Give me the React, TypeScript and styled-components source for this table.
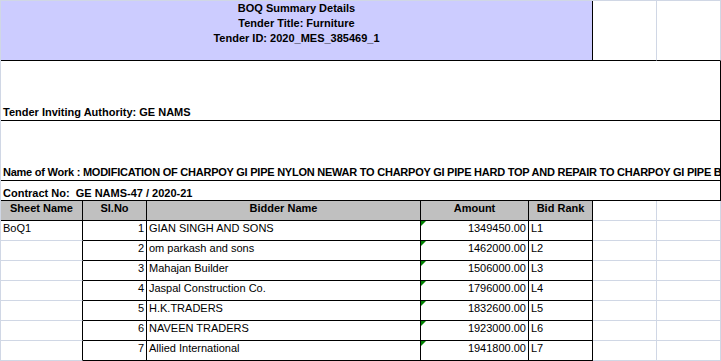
import { Fragment } from 'react';
import styled, { createGlobalStyle } from 'styled-components';

const GRID = '#d0d7e5';
const INK = '#000000';

const GlobalStyle = createGlobalStyle`
  html, body {
    margin: 0;
    padding: 0;
    background: #ffffff;
  }
  body {
    font-family: 'Liberation Sans', Arial, sans-serif;
    color: #000;
  }
`;

const Sheet = styled.div`
  display: grid;
  grid-template-columns: 82px 64px 274px 108px 64px 64px 64px;
  grid-template-rows: 60px 60px 60px repeat(9, 20px);
  width: 721px;
  border-top: 1px solid ${GRID};
  border-left: 1px solid ${GRID};
  box-sizing: border-box;
  font-size: 11px;
  line-height: 13px;
`;

type CellProps = {
  $span?: number;
  $bg?: string;
  $right?: string;
  $bottom?: string;
  $align?: 'left' | 'center' | 'right';
  $valign?: 'top' | 'center' | 'bottom';
  $bold?: boolean;
  $pt?: number;
  $pb?: number;
  $flag?: boolean;
  $tracking?: number;
};

const justify = { left: 'flex-start', center: 'center', right: 'flex-end' };
const alignY = { top: 'flex-start', center: 'center', bottom: 'flex-end' };

const Cell = styled.div<CellProps>`
  position: relative;
  box-sizing: border-box;
  grid-column: span ${(p) => p.$span ?? 1};
  display: flex;
  justify-content: ${(p) => justify[p.$align ?? 'left']};
  align-items: ${(p) => alignY[p.$valign ?? 'top']};
  background: ${(p) => p.$bg ?? '#ffffff'};
  border-right: 1px solid ${(p) => p.$right ?? GRID};
  border-bottom: 1px solid ${(p) => p.$bottom ?? GRID};
  padding: ${(p) => p.$pt ?? 0}px 2px ${(p) => p.$pb ?? 0}px 2px;
  font-weight: ${(p) => (p.$bold ? 700 : 400)};
  letter-spacing: ${(p) => p.$tracking ?? 0}px;
  white-space: nowrap;
  overflow: hidden;

  ${(p) =>
    p.$flag &&
    `
    &::before {
      content: '';
      position: absolute;
      left: 0;
      top: 0;
      border-top: 5px solid #008000;
      border-right: 5px solid transparent;
    }
  `}
`;

const TitleBlock = styled.div`
  display: flex;
  flex-direction: column;
  align-items: center;
  line-height: 15px;
  font-weight: 700;
`;

const bids = [
  ['1', 'GIAN SINGH AND SONS', '1349450.00', 'L1'],
  ['2', 'om parkash and sons', '1462000.00', 'L2'],
  ['3', 'Mahajan Builder', '1506000.00', 'L3'],
  ['4', 'Jaspal Construction Co.', '1796000.00', 'L4'],
  ['5', 'H.K.TRADERS', '1832600.00', 'L5'],
  ['6', 'NAVEEN TRADERS', '1923000.00', 'L6'],
  ['7', 'Allied International', '1941800.00', 'L7'],
];

const headers = ['Sheet Name', 'Sl.No', 'Bidder Name', 'Amount', 'Bid Rank'];

export default function App() {
  return (
    <>
      <GlobalStyle />
      <Sheet>
        {/* title block */}
        <Cell $span={5} $bg="#ccccff" $right={INK} $bottom={INK} $align="center">
          <TitleBlock>
            <span>BOQ Summary Details</span>
            <span>Tender Title: Furniture</span>
            <span>Tender ID: 2020_MES_385469_1</span>
          </TitleBlock>
        </Cell>
        <Cell $bottom={INK} />
        <Cell $bottom={INK} />

        <Cell $span={7} $right={INK} $bottom={INK} $valign="bottom" $bold $pb={1}>
          Tender Inviting Authority: GE NAMS
        </Cell>
        <Cell $span={7} $right={INK} $bottom={INK} $valign="bottom" $bold $pb={1} $tracking={-0.24}>
          Name of Work : MODIFICATION OF CHARPOY GI PIPE NYLON NEWAR TO CHARPOY GI PIPE HARD TOP AND REPAIR TO CHARPOY GI PIPE BY
          REPLACING DAMAGED PARTS
        </Cell>
        <Cell $span={7} $right={INK} $bottom={INK} $valign="bottom" $bold>
          Contract No:&nbsp; GE NAMS-47 / 2020-21
        </Cell>

        {/* column headers */}
        {headers.map((label) => (
          <Cell key={label} $bg="#c0c0c0" $right={INK} $bottom={INK} $align="center" $bold $pt={1}>
            {label}
          </Cell>
        ))}
        <Cell />
        <Cell />

        {/* bids */}
        {bids.map(([no, name, amount, rank], i) => (
          <Fragment key={no}>
            <Cell $right={INK} $pt={1}>
              {i === 0 ? 'BoQ1' : ''}
            </Cell>
            <Cell $right={INK} $bottom={INK} $align="right" $pt={1}>
              {no}
            </Cell>
            <Cell $right={INK} $bottom={INK} $pt={1}>
              {name}
            </Cell>
            <Cell $right={INK} $bottom={INK} $align="right" $pt={1} $flag>
              {amount}
            </Cell>
            <Cell $right={INK} $bottom={INK} $pt={1}>
              {rank}
            </Cell>
            <Cell />
            <Cell />
          </Fragment>
        ))}
      </Sheet>
    </>
  );
}
